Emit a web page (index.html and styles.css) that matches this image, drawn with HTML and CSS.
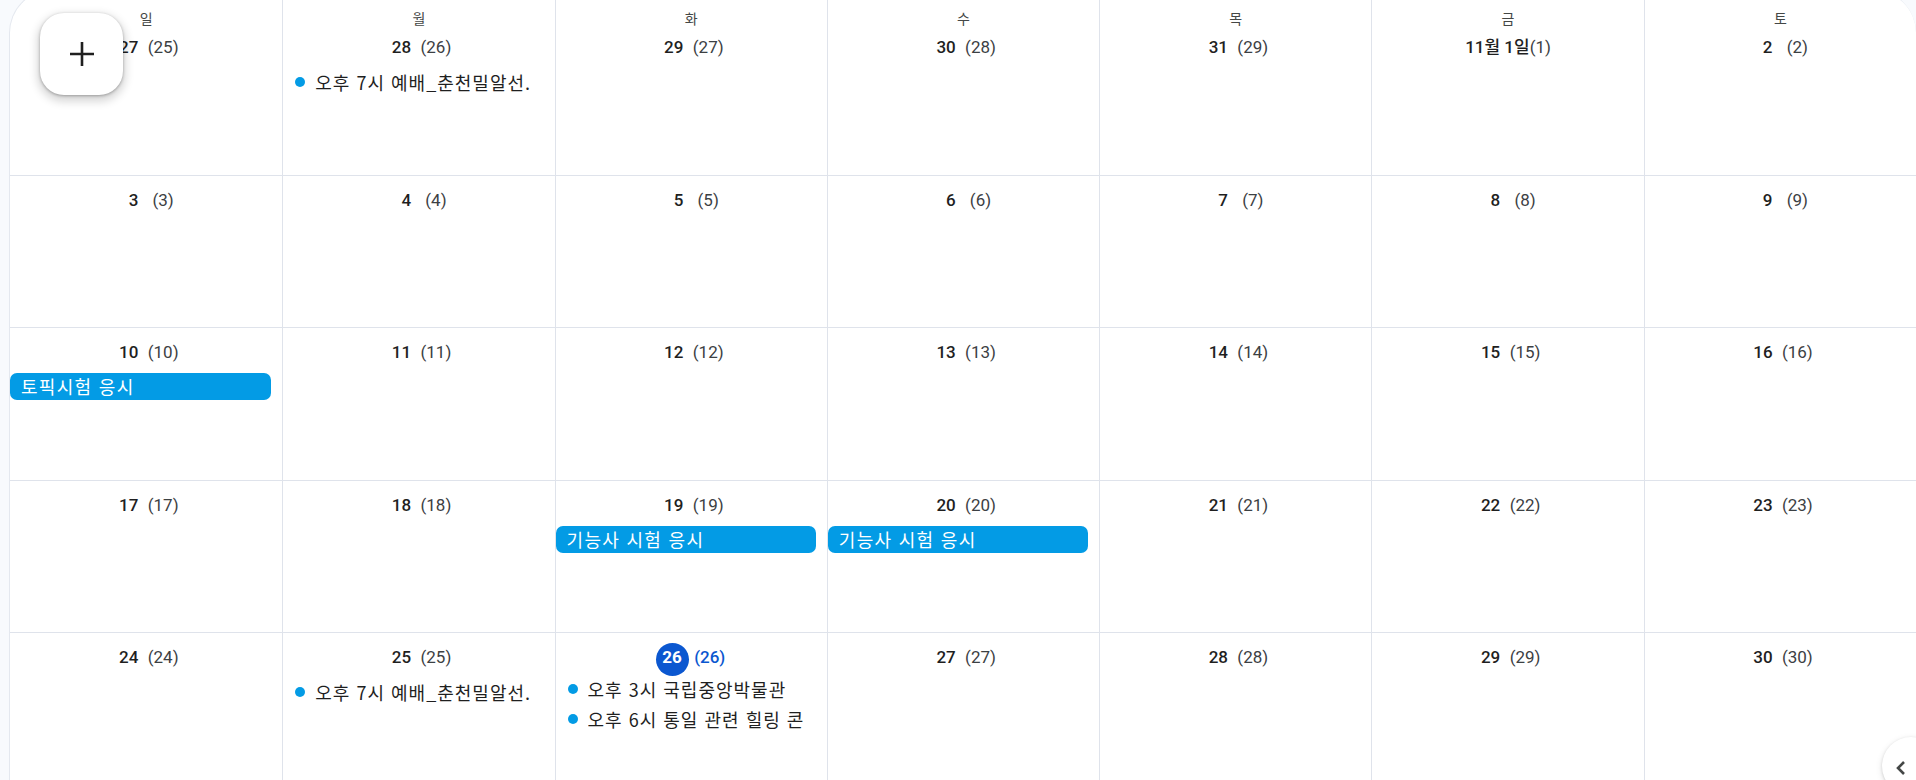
FILE: index.html
```html
<!DOCTYPE html>
<html lang="ko">
<head>
<meta charset="utf-8">
<title>Calendar</title>
<link rel="stylesheet" href="styles.css">
</head>
<body>
<div class="page">
  <div class="card">
    <div class="grid">
      <div class="cell head"><div class="dow">일</div><div class="date"><span class="num">27</span><span class="lunar">(25)</span></div></div>
      <div class="cell head"><div class="dow">월</div><div class="date"><span class="num">28</span><span class="lunar">(26)</span></div>
        <div class="events"><div class="ev"><span class="dot"></span><span class="ev-text">오후 7시 예배_춘천밀알선.</span></div></div></div>
      <div class="cell head"><div class="dow">화</div><div class="date"><span class="num">29</span><span class="lunar">(27)</span></div></div>
      <div class="cell head"><div class="dow">수</div><div class="date"><span class="num">30</span><span class="lunar">(28)</span></div></div>
      <div class="cell head"><div class="dow">목</div><div class="date"><span class="num">31</span><span class="lunar">(29)</span></div></div>
      <div class="cell head"><div class="dow">금</div><div class="date"><span class="num">11월 1일</span><span class="lunar tight">(1)</span></div></div>
      <div class="cell head"><div class="dow">토</div><div class="date"><span class="num">2</span><span class="lunar">(2)</span></div></div>

      <div class="cell"><div class="date"><span class="num">3</span><span class="lunar">(3)</span></div></div>
      <div class="cell"><div class="date"><span class="num">4</span><span class="lunar">(4)</span></div></div>
      <div class="cell"><div class="date"><span class="num">5</span><span class="lunar">(5)</span></div></div>
      <div class="cell"><div class="date"><span class="num">6</span><span class="lunar">(6)</span></div></div>
      <div class="cell"><div class="date"><span class="num">7</span><span class="lunar">(7)</span></div></div>
      <div class="cell"><div class="date"><span class="num">8</span><span class="lunar">(8)</span></div></div>
      <div class="cell"><div class="date"><span class="num">9</span><span class="lunar">(9)</span></div></div>

      <div class="cell"><div class="date"><span class="num">10</span><span class="lunar">(10)</span></div>
        <div class="events"><div class="bar">토픽시험 응시</div></div></div>
      <div class="cell"><div class="date"><span class="num">11</span><span class="lunar">(11)</span></div></div>
      <div class="cell"><div class="date"><span class="num">12</span><span class="lunar">(12)</span></div></div>
      <div class="cell"><div class="date"><span class="num">13</span><span class="lunar">(13)</span></div></div>
      <div class="cell"><div class="date"><span class="num">14</span><span class="lunar">(14)</span></div></div>
      <div class="cell"><div class="date"><span class="num">15</span><span class="lunar">(15)</span></div></div>
      <div class="cell"><div class="date"><span class="num">16</span><span class="lunar">(16)</span></div></div>

      <div class="cell"><div class="date"><span class="num">17</span><span class="lunar">(17)</span></div></div>
      <div class="cell"><div class="date"><span class="num">18</span><span class="lunar">(18)</span></div></div>
      <div class="cell"><div class="date"><span class="num">19</span><span class="lunar">(19)</span></div>
        <div class="events"><div class="bar">기능사 시험 응시</div></div></div>
      <div class="cell"><div class="date"><span class="num">20</span><span class="lunar">(20)</span></div>
        <div class="events"><div class="bar">기능사 시험 응시</div></div></div>
      <div class="cell"><div class="date"><span class="num">21</span><span class="lunar">(21)</span></div></div>
      <div class="cell"><div class="date"><span class="num">22</span><span class="lunar">(22)</span></div></div>
      <div class="cell"><div class="date"><span class="num">23</span><span class="lunar">(23)</span></div></div>

      <div class="cell"><div class="date"><span class="num">24</span><span class="lunar">(24)</span></div></div>
      <div class="cell"><div class="date"><span class="num">25</span><span class="lunar">(25)</span></div>
        <div class="events"><div class="ev"><span class="dot"></span><span class="ev-text">오후 7시 예배_춘천밀알선.</span></div></div></div>
      <div class="cell today"><div class="date"><span class="num">26</span><span class="lunar">(26)</span></div>
        <div class="events">
          <div class="ev"><span class="dot"></span><span class="ev-text">오후 3시 국립중앙박물관</span></div>
          <div class="ev"><span class="dot"></span><span class="ev-text">오후 6시 통일 관련 힐링 콘</span></div>
        </div></div>
      <div class="cell"><div class="date"><span class="num">27</span><span class="lunar">(27)</span></div></div>
      <div class="cell"><div class="date"><span class="num">28</span><span class="lunar">(28)</span></div></div>
      <div class="cell"><div class="date"><span class="num">29</span><span class="lunar">(29)</span></div></div>
      <div class="cell"><div class="date"><span class="num">30</span><span class="lunar">(30)</span></div></div>
    </div>
  </div>

  <button class="fab" aria-label="만들기">
    <svg width="26" height="26" viewBox="0 0 26 26"><path d="M13 1v24M1 13h24" stroke="#1f1f1f" stroke-width="2.6" fill="none"/></svg>
  </button>

  <button class="side-toggle" aria-label="패널 열기">
    <svg class="chev" width="12" height="16" viewBox="0 0 12 16"><path d="M9 2L3 8l6 6" stroke="#444746" stroke-width="2.6" fill="none" stroke-linecap="butt"/></svg>
  </button>
</div>
</body>
</html>
```
FILE: styles.css
```css
html, body {
  margin: 0;
  padding: 0;
}

body {
  background: #f8fafd;
  font-family: Roboto, "Noto Sans CJK KR", "Noto Sans", sans-serif;
  color: #1f1f1f;
  width: 1916px;
  height: 780px;
  overflow: hidden;
}

.page {
  position: relative;
  width: 1916px;
  height: 780px;
  overflow: hidden;
}

.card {
  margin: -11px 0 0 9px;
  background: #ffffff;
  border: 1px solid #e4e8ef;
  border-right: 0;
  border-bottom: 0;
  border-radius: 44px 44px 0 0;
  overflow: hidden;
  height: 820px;
}

.grid {
  display: grid;
  grid-template-columns: repeat(7, 1fr);
  grid-template-rows: 186px 152px 153px 152px 153px;
}

.cell {
  border-left: 1px solid #dfe3eb;
  border-bottom: 1px solid #dfe3eb;
  padding-top: 12px;
  display: flex;
  flex-direction: column;
  min-width: 0;
  overflow: hidden;
}

.cell:nth-child(7n+1) {
  border-left: 0;
}

.cell.head {
  padding-top: 18px;
}

.dow {
  text-align: center;
  font-family: "Noto Sans CJK KR", sans-serif;
  font-size: 14px;
  line-height: 20px;
  color: #444746;
  margin-bottom: 7px;
}

.date {
  display: flex;
  justify-content: center;
  align-items: center;
  height: 24px;
  font-size: 17px;
  line-height: 24px;
  font-family: Roboto, "Noto Sans CJK KR", sans-serif;
}

.num {
  display: inline-block;
  min-width: 30px;
  text-align: center;
  font-weight: 500;
  color: #1f1f1f;
}

.lunar {
  margin-left: 4px;
  color: #3c4043;
}

.lunar.tight {
  margin-left: 0;
}

.today .num {
  position: relative;
  z-index: 0;
  color: #ffffff;
  font-weight: 700;
}

.today .num::before {
  content: "";
  position: absolute;
  left: 50%;
  top: 50%;
  width: 33px;
  height: 33px;
  margin-left: -16.5px;
  margin-top: -14px;
  border-radius: 50%;
  background: #0b57d0;
  z-index: -1;
}

.today .lunar {
  color: #0b57d0;
  font-weight: 500;
  margin-left: 7px;
}

.events {
  margin-top: 9px;
  display: flex;
  flex-direction: column;
  gap: 2px;
  padding-right: 11px;
}

.today .events {
  margin-top: 6px;
}

.ev {
  height: 28px;
  display: flex;
  align-items: center;
  white-space: nowrap;
  overflow: hidden;
  font-family: "Noto Sans CJK KR", sans-serif;
  font-size: 18px;
  letter-spacing: 1px;
  color: #1f1f1f;
}

.dot {
  flex: none;
  width: 10px;
  height: 10px;
  border-radius: 50%;
  background: #039be5;
  margin-left: 12px;
  margin-right: 10px;
}

.ev-text {
  overflow: hidden;
}

.bar {
  height: 27px;
  line-height: 27px;
  border-radius: 7px;
  background: #039be5;
  color: #ffffff;
  font-family: "Noto Sans CJK KR", sans-serif;
  font-size: 18px;
  letter-spacing: 1.3px;
  padding-left: 11px;
  white-space: nowrap;
  overflow: hidden;
}

.fab {
  position: absolute;
  left: 40px;
  top: 13px;
  width: 83px;
  height: 82px;
  border: 0;
  padding: 0;
  border-radius: 24px;
  background: #ffffff;
  box-shadow: 0 1px 3px rgba(0, 0, 0, 0.3), 0 4px 8px 3px rgba(0, 0, 0, 0.15);
  display: flex;
  align-items: center;
  justify-content: center;
}

.side-toggle {
  position: absolute;
  left: 1882px;
  top: 737px;
  width: 58px;
  height: 58px;
  border: 0;
  padding: 0;
  border-radius: 50%;
  background: #ffffff;
  box-shadow: 0 1px 3px rgba(0, 0, 0, 0.15), 0 2px 6px 1px rgba(0, 0, 0, 0.08);
}

.chev {
  position: absolute;
  left: 13px;
  top: 23px;
}
```
